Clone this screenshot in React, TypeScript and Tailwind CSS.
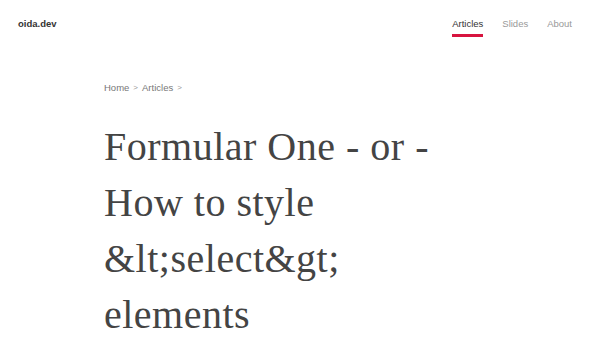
import React from 'react';

const navItems = [
  { label: 'Articles', active: true },
  { label: 'Slides', active: false },
  { label: 'About', active: false },
];

export default function App() {
  return (
    <div className="min-h-screen bg-white font-['Liberation_Sans',Arial,sans-serif]">
      <header className="flex items-start justify-between pl-[18px] pr-[28px] pt-[17px]">
        <a className="text-[9.5px] font-bold text-[#333]">oida.dev</a>
        <nav className="flex gap-[19px] text-[9.5px]">
          {navItems.map((item) => (
            <a
              key={item.label}
              className={
                item.active
                  ? 'pb-[3px] border-b-[3px] border-[#d7143f] text-[#333]'
                  : 'text-[#999]'
              }
            >
              {item.label}
            </a>
          ))}
        </nav>
      </header>

      <main className="pl-[104px] pt-[44px]">
        <div className="flex items-center gap-[4px] text-[9.5px] text-[#777]">
          <a>Home</a>
          <span className="text-[8px] text-[#999]">&gt;</span>
          <a>Articles</a>
          <span className="text-[8px] text-[#999]">&gt;</span>
        </div>
        <h1 className="mt-[23px] w-[340px] font-['Liberation_Serif','Times_New_Roman',serif] text-[40px] leading-[56px] tracking-[0.5px] text-[#444]">
          Formular One - or - How to style &amp;lt;select&amp;gt; elements
        </h1>
      </main>
    </div>
  );
}
